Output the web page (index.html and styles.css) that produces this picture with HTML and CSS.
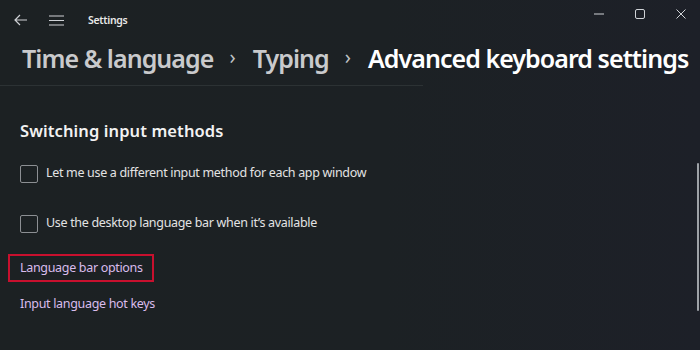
FILE: index.html
```html
<!DOCTYPE html>
<html>
<head>
<meta charset="utf-8">
<link rel="stylesheet" href="styles.css">
</head>
<body>
<div class="window">
  <header class="titlebar">
    <div class="tb-left">
      <svg class="icon back" width="14" height="12" viewBox="0 0 14 12"><path d="M6 1 L1 6 L6 11 M1 6 H13" fill="none" stroke="#cfd2d6" stroke-width="1.2"/></svg>
      <svg class="icon menu" width="15" height="11" viewBox="0 0 15 11"><path d="M0 1 H15 M0 5.5 H15 M0 10 H15" fill="none" stroke="#cfd2d6" stroke-width="1.2"/></svg>
      <span class="app-title">Settings</span>
    </div>
    <div class="tb-right">
      <svg class="ctl" width="10" height="10" viewBox="0 0 10 10"><path d="M0 5 H10" stroke="#d0d3d7" stroke-width="1"/></svg>
      <svg class="ctl" width="10" height="10" viewBox="0 0 10 10"><rect x="0.5" y="0.5" width="9" height="9" rx="1.5" fill="none" stroke="#d0d3d7" stroke-width="1"/></svg>
      <svg class="ctl" width="10" height="10" viewBox="0 0 10 10"><path d="M0.5 0.5 L9.5 9.5 M9.5 0.5 L0.5 9.5" stroke="#d0d3d7" stroke-width="1"/></svg>
    </div>
  </header>
  <h1 class="breadcrumb">
    <span class="crumb">Time &amp; language</span>
    <span class="chev">›</span>
    <span class="crumb">Typing</span>
    <span class="chev">›</span>
    <span class="crumb current">Advanced keyboard settings</span>
  </h1>
  <div class="divider"></div>
  <main class="content">
    <h2 class="section-title">Switching input methods</h2>
    <label class="check-row"><span class="box"></span><span>Let me use a different input method for each app window</span></label>
    <label class="check-row"><span class="box"></span><span>Use the desktop language bar when it’s available</span></label>
    <div class="links">
      <a class="link highlighted">Language bar options</a>
      <a class="link">Input language hot keys</a>
    </div>
  </main>
  <div class="scrollbar"></div>
</div>
</body>
</html>
```
FILE: styles.css
```css
* { box-sizing: border-box; }
html, body { margin: 0; padding: 0; }
body {
  width: 700px;
  height: 350px;
  overflow: hidden;
  background: #1c2024;
  font-family: "Noto Sans", "Open Sans", sans-serif;
  color: #e6e6e6;
}
.window {
  position: relative;
  width: 700px;
  height: 350px;
  background: linear-gradient(90deg, #1c2123 0%, #1c2124 55%, #1d2028 100%);
}
.titlebar {
  height: 40px;
  display: flex;
  justify-content: space-between;
  align-items: center;
}
.tb-left {
  display: flex;
  align-items: center;
  padding-left: 14px;
}
.back { margin-right: 21px; }
.menu { margin-right: 24px; }
.app-title {
  font-size: 10.5px;
  font-weight: 600;
  color: #e8e8e8;
  letter-spacing: -0.3px;
}
.tb-right {
  display: flex;
  align-items: center;
  gap: 31px;
  padding-right: 14px;
  margin-top: -13px;
}
.breadcrumb {
  margin: 0;
  padding-left: 22px;
  height: 36px;
  display: flex;
  align-items: center;
  font-size: 25px;
  font-weight: 600;
  white-space: nowrap;
  letter-spacing: -0.95px;
}
.crumb { color: #c9cacc; }
.crumb.current { color: #ffffff; }
.chev {
  color: #bfc1c4;
  font-size: 20px;
  font-weight: 400;
  margin: 0 18px 0 16px;
  position: relative;
  top: -2px;
}
.divider {
  margin-top: 9px;
  width: 423px;
  height: 1px;
  background: #2c3234;
}
.content {
  padding-left: 20px;
}
.section-title {
  margin: 34px 0 0 0;
  font-size: 16.5px;
  font-weight: 600;
  color: #f2f2f2;
  line-height: 22px;
  letter-spacing: 0.1px;
}
.check-row {
  display: flex;
  align-items: center;
  gap: 8px;
  font-size: 12.5px;
  letter-spacing: -0.32px;
  color: #e3e3e3;
  height: 18px;
  line-height: 16px;
  margin-top: 23px;
}
.check-row span:last-child { position: relative; top: -1px; }
.check-row + .check-row { margin-top: 32px; }
.box {
  width: 18px;
  height: 18px;
  border: 1px solid #8c8f93;
  border-radius: 2px;
  flex: none;
}
.links {
  display: flex;
  flex-direction: column;
  align-items: flex-start;
  margin-left: -12px;
  margin-top: 21px;
}
.link {
  font-size: 12.5px;
  letter-spacing: -0.32px;
  color: #d9bcec;
  padding: 5px 12px 6px 12px;
  line-height: 17px;
  white-space: nowrap;
}
.link.highlighted {
  border: 2px solid #c8102e;
  padding: 3px 10px 4px 10px;
  width: 146px;
  height: 28px;
}
.link + .link { margin-top: 8px; }
.scrollbar {
  position: absolute;
  right: 1px;
  top: 163px;
  width: 2px;
  height: 148px;
  border-radius: 1px;
  background: #9ea2a7;
}
```
